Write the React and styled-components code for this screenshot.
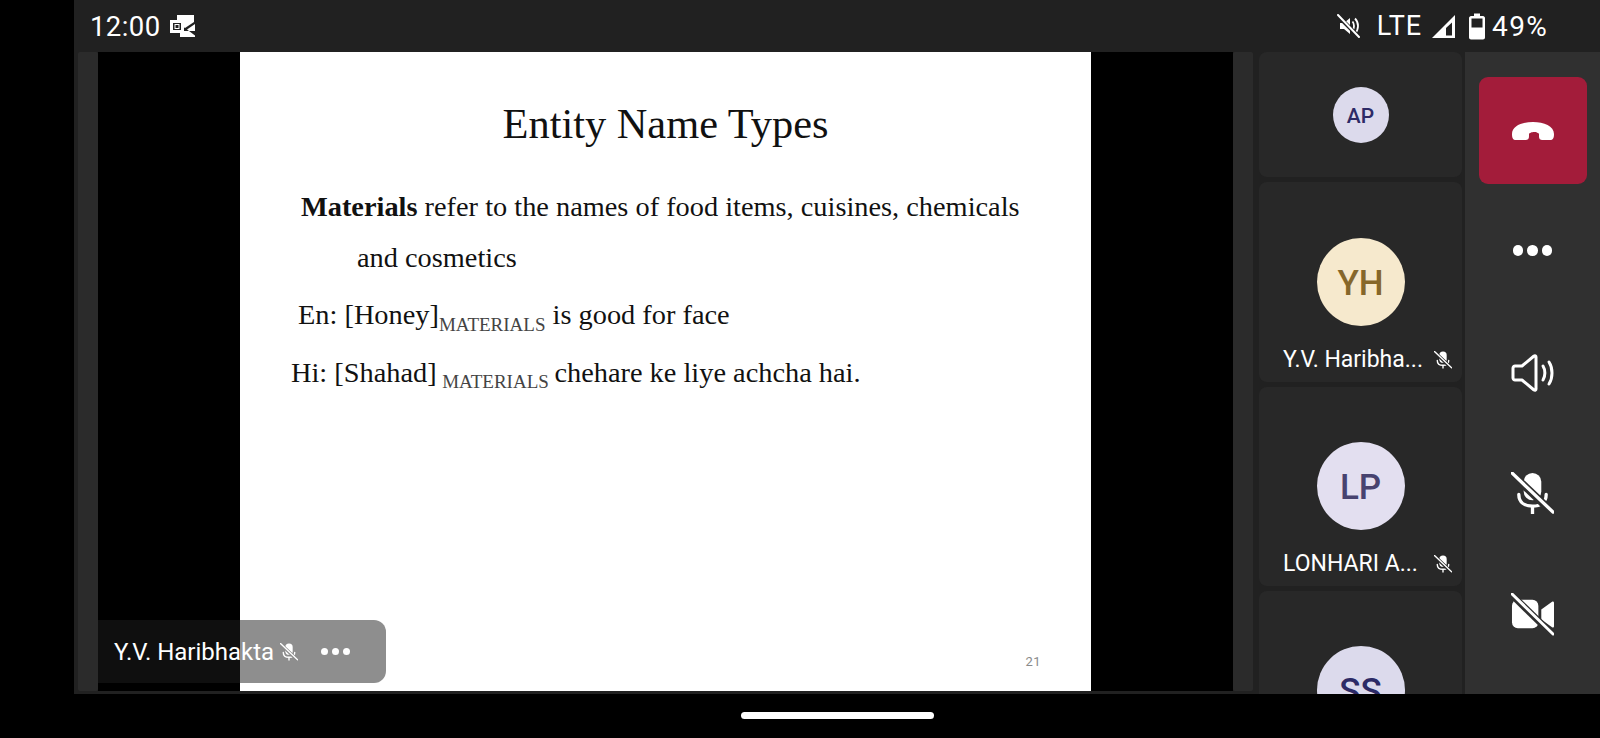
import React from "react";
import styled, { createGlobalStyle } from "styled-components";

const GlobalStyle = createGlobalStyle`
  html, body {
    margin: 0;
    padding: 0;
    background: #000;
  }
  * {
    box-sizing: border-box;
  }
`;

const Page = styled.div`
  width: 1600px;
  height: 738px;
  padding-left: 74px;
  background: #000;
  overflow: hidden;
  display: flex;
  flex-direction: column;
  font-family: Roboto, "Noto Sans", sans-serif;
`;

const StatusBar = styled.div`
  height: 52px;
  flex: none;
  background: #212121;
  color: #fff;
  display: flex;
  align-items: center;
  padding: 0 52px 0 16px;
`;

const Clock = styled.span`
  font-size: 27.5px;
  letter-spacing: 0.4px;
  margin-right: 10px;
`;

const StatusRight = styled.div`
  margin-left: auto;
  display: flex;
  align-items: center;
`;

const StatusText = styled.span`
  font-size: ${(p) => p.$size}px;
  letter-spacing: ${(p) => p.$spacing || "0"};
  margin: ${(p) => p.$margin || "0"};
`;

const SignalSlot = styled.div`
  display: flex;
  margin-right: 13px;
`;

const Main = styled.div`
  height: 642px;
  flex: none;
  background: #212121;
  padding-left: 4px;
  display: flex;
`;

const ScrollStrip = styled.div`
  width: 20px;
  height: 639px;
  flex: none;
  background: #2b2b2b;
  border-radius: 2px;
`;

const Stage = styled.div`
  position: relative;
  width: 1135px;
  height: 639px;
  flex: none;
  background: #000;
  display: flex;
  justify-content: center;
`;

const Slide = styled.div`
  width: 851px;
  height: 639px;
  background: #fff;
  color: #111;
  font-family: "Liberation Serif", "Times New Roman", serif;
  display: flex;
  flex-direction: column;
  padding-top: 48px;
`;

const SlideTitle = styled.div`
  font-size: 42.4px;
  line-height: 48px;
  text-align: center;
  margin-bottom: 43px;
`;

const SlideLine = styled.div`
  font-size: 28.35px;
  line-height: 32px;
  white-space: nowrap;
  padding-left: ${(p) => p.$indent}px;
  margin-bottom: ${(p) => p.$gap}px;
`;

const Sub = styled.span`
  font-size: 19px;
  color: #444;
  position: relative;
  top: ${(p) => p.$top}px;
  margin: 0 ${(p) => p.$pull || 0}px 0 ${(p) => p.$pull || 0}px;
`;

const PageNumber = styled.div`
  align-self: flex-end;
  margin: auto 50px 22px 0;
  font-family: Roboto, sans-serif;
  font-size: 13px;
  letter-spacing: 0.5px;
  color: #8a8a8a;
`;

const NameChip = styled.div`
  position: absolute;
  left: 0;
  bottom: 8px;
  width: 288px;
  height: 63px;
  padding-left: 16px;
  display: flex;
  align-items: center;
  background: rgba(30, 30, 30, 0.5);
  border-radius: 0 12px 12px 0;
  color: #fff;
  font-size: 24px;
`;

const ChipMic = styled.div`
  display: flex;
  margin-left: 6px;
`;

const Dots = styled.div`
  display: flex;
  gap: ${(p) => p.$gap}px;
  margin-left: ${(p) => p.$left || 0}px;
  margin-bottom: ${(p) => p.$up || 0}px;

  i {
    display: block;
    width: ${(p) => p.$size}px;
    height: ${(p) => p.$size}px;
    border-radius: 50%;
    background: #fff;
  }
`;

const TileColumn = styled.div`
  width: 203px;
  margin-left: 6px;
  margin-right: 3px;
  flex: none;
  overflow: hidden;
  display: flex;
  flex-direction: column;
  gap: 5px;
`;

const Tile = styled.div`
  flex: none;
  height: ${(p) => p.$height}px;
  background: #282828;
  border-radius: 8px;
  display: flex;
  flex-direction: column;
  align-items: center;
  padding-top: ${(p) => p.$top}px;
`;

const Avatar = styled.div`
  width: ${(p) => p.$size}px;
  height: ${(p) => p.$size}px;
  flex: none;
  padding-top: 2px;
  border-radius: 50%;
  background: ${(p) => p.$bg};
  color: ${(p) => p.$fg};
  font-size: ${(p) => p.$font}px;
  font-weight: 500;
  display: flex;
  align-items: center;
  justify-content: center;
`;

const TileName = styled.div`
  align-self: stretch;
  margin-top: 20px;
  padding: 0 10px 0 24px;
  display: flex;
  align-items: center;
  justify-content: space-between;
  color: #fff;
  font-size: 23px;
  line-height: 28px;
  white-space: nowrap;
`;

const Sidebar = styled.div`
  flex: 1;
  background: #303030;
  padding-top: 18px;
  display: flex;
  flex-direction: column;
  align-items: center;
`;

const SideSlot = styled.div`
  height: 121px;
  flex: none;
  display: flex;
  align-items: center;
  justify-content: center;
`;

const HangUpButton = styled.div`
  width: 108px;
  height: 107px;
  background: #a31c3a;
  border-radius: 9px;
  display: flex;
  align-items: center;
  justify-content: center;
`;

const GestureArea = styled.div`
  flex: 1;
  display: flex;
  justify-content: center;
  padding-top: 18px;
`;

const GesturePill = styled.div`
  width: 193px;
  height: 7px;
  border-radius: 4px;
  background: #fff;
`;

const MicOff = ({ size, bg }) => (
  <svg width={size} height={size} viewBox="0 0 44 44" fill="none">
    <rect x="13" y="1" width="18" height="28" rx="9" fill="#fff" />
    <path d="M8 23c0 8 6 12 14 12s14-4 14-12" stroke="#fff" strokeWidth="3.4" strokeLinecap="round" />
    <path d="M22 35v8" stroke="#fff" strokeWidth="3.4" />
    <path d="M3 4l40 38" stroke={bg} strokeWidth="8" />
    <path d="M1 1l42 40" stroke="#fff" strokeWidth="3.4" strokeLinecap="round" />
  </svg>
);

const Speaker = () => (
  <svg width="44" height="38" viewBox="0 0 44 38" fill="none" stroke="#fff" strokeWidth="3" strokeLinecap="round" strokeLinejoin="round">
    <path d="M2 14c0-1 1-2 2-2h7L23 2c1-.5 2 0 2 1v32c0 1-1 1.500-2 1L11 26H4c-1 0-2-1-2-2z" />
    <path d="M32 12c2.500 4 2.500 10 0 14" />
    <path d="M38 8c4 6 4 16 0 22" />
  </svg>
);

const CamOff = () => (
  <svg width="43" height="43" viewBox="0 0 44 44" fill="none">
    <rect x="1" y="7" width="27" height="29" rx="6" fill="#fff" />
    <path d="M31 17l11-8c1-1 2 0 2 1v24c0 1-1 2-2 1l-11-8z" fill="#fff" />
    <path d="M3 4l40 39" stroke="#303030" strokeWidth="7" />
    <path d="M1 1l42 41" stroke="#fff" strokeWidth="3" strokeLinecap="round" />
  </svg>
);

const HangUp = () => (
  <svg width="44" height="20" viewBox="0 0 44 20" fill="#fff">
    <path d="M1 13C1 5 11 1 22 1s21 4 21 12c0 4-1 6-4 6h-7c-3 0-4-1-4-4v-2c0-1-3-2-5-2s-5 1-5 2v2c0 3-1 4-4 4H5c-3 0-4-2-4-6z" />
  </svg>
);

const OutlookIcon = () => (
  <svg width="27" height="22" viewBox="0 0 27 22">
    <path d="M7 0h17v7l-9 6-8-5z" fill="#fff" />
    <path d="M10 16h15V9l-8 5.500 8 6V22H10z" fill="#fff" />
    <rect x="1.500" y="6.500" width="11" height="10" fill="#212121" stroke="#fff" strokeWidth="3" />
    <rect x="5" y="9.500" width="4" height="4" fill="#212121" stroke="#fff" strokeWidth="1" />
  </svg>
);

const MutedVolume = () => (
  <svg width="24" height="24" viewBox="0 0 24 24" fill="none">
    <path d="M3 9v6h4l6 5V4L7 9H3z" fill="#fff" />
    <path d="M15.500 7.500c2 2.500 2 6.500 0 9M18 4.500c4 4 4 11 0 15" stroke="#fff" strokeWidth="1.800" />
    <path d="M2 3l20 20" stroke="#212121" strokeWidth="4" />
    <path d="M1 1l21 22" stroke="#fff" strokeWidth="2" strokeLinecap="round" />
  </svg>
);

const Signal = () => (
  <svg width="25" height="25" viewBox="0 0 25 25" fill="none">
    <path d="M24 1v23H1z" fill="#fff" />
    <path d="M21 8.500V21.500H15V14z" fill="#212121" />
  </svg>
);

const Battery = () => (
  <svg width="16" height="27" viewBox="0 0 16 26">
    <path d="M5 0h6v2.500h3c1 0 2 1 2 2V24c0 1-1 2-2 2H2c-1 0-2-1-2-2V4.500c0-1 1-2 2-2h3z" fill="#fff" />
    <rect x="2.500" y="5" width="11" height="9" fill="#212121" />
  </svg>
);

const participants = [
  { initials: "AP", height: 125, top: 35, size: 56, font: 21, bg: "#dcdaec", fg: "#2d2a66" },
  { initials: "YH", height: 200, top: 56, size: 88, font: 35, bg: "#f6e9cd", fg: "#86672a", name: "Y.V. Haribha..." },
  { initials: "LP", height: 199, top: 55, size: 88, font: 35, bg: "#e3dff0", fg: "#47426f", name: "LONHARI A..." },
  { initials: "SS", height: 200, top: 55, size: 88, font: 35, bg: "#dcdaec", fg: "#2d2a66" },
];

const App = () => {
  return (
    <Page>
      <GlobalStyle />
      <StatusBar>
        <Clock>12:00</Clock>
        <OutlookIcon />
        <StatusRight>
          <MutedVolume />
          <StatusText $size={27} $spacing="1px" $margin="0 9px 0 16px">LTE</StatusText>
          <SignalSlot><Signal /></SignalSlot>
          <Battery />
          <StatusText $size={28} $spacing="1.300px" $margin="0 0 0 7px">49%</StatusText>
        </StatusRight>
      </StatusBar>

      <Main>
        <ScrollStrip />
        <Stage>
          <Slide>
            <SlideTitle>Entity Name Types</SlideTitle>
            <SlideLine $indent={61} $gap={19}>
              <b>Materials</b> refer to the names of food items, cuisines, chemicals
            </SlideLine>
            <SlideLine $indent={117} $gap={25}>and cosmetics</SlideLine>
            <SlideLine $indent={58} $gap={23}>
              En: [Honey]<Sub $top={7}>MATERIALS</Sub> is good for face
            </SlideLine>
            <SlideLine $indent={51} $gap={0}>
              Hi: [Shahad] <Sub $top={6} $pull={-1.500}>MATERIALS</Sub> chehare ke liye achcha hai.
            </SlideLine>
            <PageNumber>21</PageNumber>
          </Slide>
          <NameChip>
            Y.V. Haribhakta
            <ChipMic><MicOff size={18} bg="#8c8c8c" /></ChipMic>
            <Dots $size={7} $gap={4} $left={23}><i /><i /><i /></Dots>
          </NameChip>
        </Stage>
        <ScrollStrip />
        <TileColumn>
          {participants.map((p) => (
            <Tile key={p.initials} $height={p.height} $top={p.top}>
              <Avatar $size={p.size} $bg={p.bg} $fg={p.fg} $font={p.font}>{p.initials}</Avatar>
              {p.name && (
                <TileName>
                  {p.name}
                  <MicOff size={18} bg="#282828" />
                </TileName>
              )}
            </Tile>
          ))}
        </TileColumn>
        <Sidebar>
          <SideSlot>
            <HangUpButton><HangUp /></HangUpButton>
          </SideSlot>
          <SideSlot>
            <Dots $size={10.500} $gap={4} $up={2}><i /><i /><i /></Dots>
          </SideSlot>
          <SideSlot><Speaker /></SideSlot>
          <SideSlot><MicOff size={43} bg="#303030" /></SideSlot>
          <SideSlot><CamOff /></SideSlot>
        </Sidebar>
      </Main>

      <GestureArea>
        <GesturePill />
      </GestureArea>
    </Page>
  );
};

export default App;
